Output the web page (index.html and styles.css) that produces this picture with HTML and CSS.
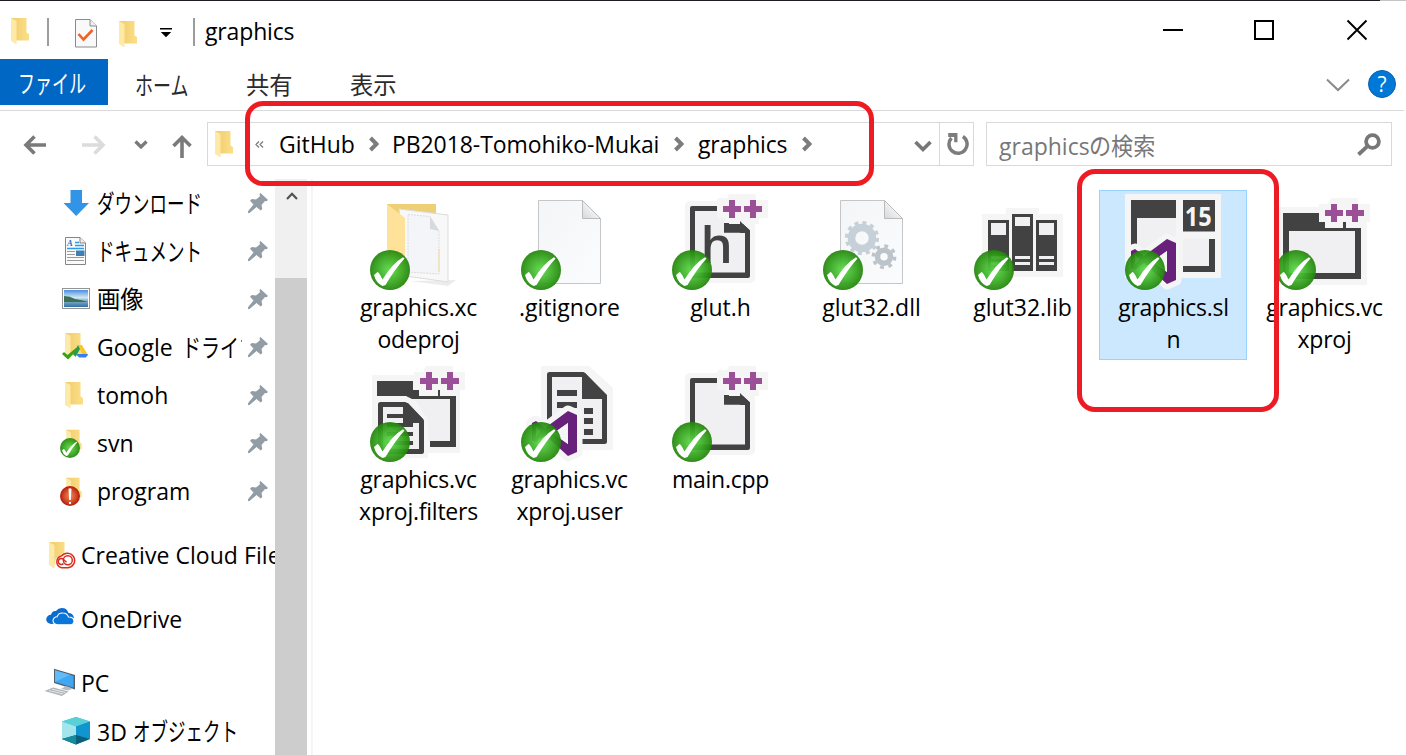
FILE: index.html
```html
<!DOCTYPE html>
<html lang="ja">
<head>
<meta charset="utf-8">
<title>graphics</title>
<link rel="stylesheet" href="styles.css">
</head>
<body>
<svg class="defs" width="0" height="0">
  <defs>
    <radialGradient id="gGreen" cx=".5" cy=".5" r=".52"><stop offset="0" stop-color="#5fdc4c"/><stop offset=".5" stop-color="#3db028"/><stop offset=".85" stop-color="#289010"/><stop offset="1" stop-color="#1f7d08"/></radialGradient>
    <radialGradient id="gRed" cx=".5" cy=".5" r=".52"><stop offset="0" stop-color="#f08a50"/><stop offset=".6" stop-color="#d04a28"/><stop offset="1" stop-color="#b01208"/></radialGradient>
    <linearGradient id="gFold" x1="0" y1="0" x2="1" y2="0"><stop offset="0" stop-color="#f0cc6c"/><stop offset="1" stop-color="#fbdf88"/></linearGradient>
    <linearGradient id="gPage" x1="0" y1="0" x2="1" y2="1"><stop offset="0" stop-color="#f4f5f6"/><stop offset="1" stop-color="#fbfcfd"/></linearGradient>
    <linearGradient id="gCorner" x1="0" y1="1" x2="1" y2="0"><stop offset="0" stop-color="#d5d7d9"/><stop offset=".6" stop-color="#f5f5f5"/></linearGradient>
    <linearGradient id="gSky" x1="0" y1="0" x2="0" y2="1"><stop offset="0" stop-color="#4c8fe0"/><stop offset=".45" stop-color="#d3e8f5"/><stop offset=".6" stop-color="#8fb6c8"/><stop offset="1" stop-color="#2f6fa8"/></linearGradient>
    <symbol id="folder" viewBox="0 0 20 28"><path d="M1 1H16.500V15.500L19 17V23.500H4Z" fill="url(#gFold)"/><path d="M1 1L6.500 4V27.500L1 24Z" fill="#ffe9a6"/></symbol>
    <symbol id="badge" viewBox="0 0 40 40"><circle cx="20" cy="20" r="20" fill="url(#gGreen)" opacity=".93"/><path d="M4 25L7.500 22Q9 22 12.500 29.500Q23 13 33 7.300L34.500 8.500Q25 19 15.500 35L12.500 36Q6 33 4 25Z" fill="#fff"/></symbol>
    <symbol id="plus" viewBox="0 0 51 30"><path d="M12 0h18v6h-9v0h9v-6h9v6h12v18h-9v6h-18v0h-12v-6h-12v-18h9z" fill="#f5f5f5"/><path d="M12 6h6v6h6v6h-6v6h-6v-6h-6v-6h6zM33 6h6v6h6v6h-6v6h-6v-6h-6v-6h6z" fill="#9b4f96"/></symbol>
    <symbol id="sheet" viewBox="0 0 96 96"><path d="M17.500 6.500H61.500L79.500 24.500V89.500H17.500Z" fill="url(#gPage)" stroke="#c4c6c8"/><path d="M61.500 6.500V24.500H79.500Z" fill="url(#gCorner)" stroke="#b9bbbd"/></symbol>
    <symbol id="codepage" viewBox="0 0 96 96"><rect x="13" y="7" width="70" height="82" rx="5" fill="#f5f5f5"/><path d="M20 14H68L76 37V81H20Z" fill="#f0eff1"/><path d="M46 12H20Q18 12 18 14V82Q18 84 20 84H76Q78 84 78 82V36.500L68 26.500V29H52V38.500H73V78.500H23V17H46Z" fill="#424242"/><path d="M46 7h7v22h15l15 10V4H46Z" fill="#f5f5f5"/><path d="M52 29H70L78 36.500V38.500H52Z" fill="#424242"/><use href="#plus" x="45" y="0" width="51" height="30"/><path d="M68 27L78 37V39H68Z" fill="#424242"/></symbol>
    <symbol id="vs" viewBox="0 0 60 96"><path fill-rule="evenodd" d="M42 45L51 49V86L42 90L19 69L10 76L6 74V57L10 55L19 62ZM42 57L27 67.500L42 78ZM10 61V70L14.500 65.500Z" fill="#68217a" stroke="#f5f5f5" stroke-width="11" stroke-linejoin="round" paint-order="stroke"/><path d="M42 57L27 67.500L42 78ZM10 61V70L14.500 65.500Z" fill="#f5f5f5"/></symbol>
    <symbol id="pin" viewBox="0 0 20 20"><path d="M12.500 0L20 7L18.500 8.300L17 8L13.500 12L14.300 16L12.600 17.500L8.500 14L1.500 20H0V18.300L5.500 11.500L2 7.800L3.800 6L8 6.500L12 3.300L11.500 1.300Z" fill="#929ca4"/></symbol>
    <symbol id="chev" viewBox="0 0 10 16"><path d="M1.500 2L7.500 8L1.500 14" fill="none" stroke="#7c7c7c" stroke-width="4"/></symbol>
  </defs>
</svg>
<div class="window">
  <div class="edge"></div>
  <header class="titlebar">
    <svg class="tfolder" width="20" height="28"><use href="#folder"/></svg>
    <i class="bar bar1"></i>
    <svg class="tcheck" width="22" height="29" viewBox="0 0 22 29"><path d="M.5.500H15L21.500 7V28H.5Z" fill="#f9f9fb" stroke="#8b8b8b"/><path d="M15 .5V7H21.500" fill="#eee" stroke="#8b8b8b"/><path d="M3.500 15L8.500 20.500L17.500 11" fill="none" stroke="#f4621d" stroke-width="2.600"/></svg>
    <svg class="tfolder2" width="20" height="28"><use href="#folder"/></svg>
    <svg class="tdrop" width="12" height="10" viewBox="0 0 12 10"><path d="M0 0H12V1.500H0ZM.8 4H11.200L6 9.200Z" fill="#000"/></svg>
    <i class="bar bar2"></i>
    <span class="title">graphics</span>
    <svg class="wbtn" width="206" height="22" viewBox="0 0 206 22"><path d="M0 11H20" stroke="#000" stroke-width="2"/><rect x="92" y="2" width="18" height="18" fill="none" stroke="#000" stroke-width="2"/><path d="M184.500 1.500L203.500 20.500M203.500 1.500L184.500 20.500" stroke="#000" stroke-width="1.900"/></svg>
  </header>
  <nav class="tabs">
    <span class="tab file"><b class="k">ファイル</b></span>
    <span class="tab t-home"><b class="k">ホーム</b></span>
    <span class="tab t-share"><b class="k kanji">共有</b></span>
    <span class="tab t-view"><b class="k kanji">表示</b></span>
    <svg class="expand" width="24" height="14" viewBox="0 0 24 14"><path d="M1 1.500L12 12L23 1.500" fill="none" stroke="#8a8a8a" stroke-width="2"/></svg>
    <span class="help">?</span>
  </nav>
  <div class="addressrow">
    <svg class="navs" width="207" height="44" viewBox="0 0 207 44" fill="none" stroke="#7a7a7a" stroke-width="3.600">
      <path d="M46 23H26M34.500 14.500L26 23L34.500 31.500"/>
      <path stroke="#dcdcdc" d="M82 23H102M94.500 14.500L103 23L94.500 31.500"/>
      <path stroke-width="3.300" d="M135.500 19.500L141 25L146.500 19.500"/>
      <path d="M182 36V16M173.500 24L182 15.500L190.500 24"/>
    </svg>
    <div class="address">
      <svg class="afolder" width="20" height="28"><use href="#folder"/></svg>
      <svg class="laq" width="9" height="7" viewBox="0 0 9 7"><path d="M4 .5L1 3.500L4 6.500M8 .5L5 3.500L8 6.500" fill="none" stroke="#777" stroke-width="1.200"/></svg>
      <span class="c1">GitHub</span><svg class="cv" width="10" height="16"><use href="#chev"/></svg>
      <span class="c2">PB2018-Tomohiko-Mukai</span><svg class="cv" width="10" height="16"><use href="#chev"/></svg>
      <span class="c3">graphics</span><svg class="cv" width="10" height="16"><use href="#chev"/></svg>
      <svg class="adrop" width="18" height="13" viewBox="0 0 18 13"><path d="M1.500 2L9 9.500L16.500 2" fill="none" stroke="#777" stroke-width="3.600"/></svg>
    </div>
    <div class="refresh"><svg width="22" height="24" viewBox="0 0 20 22"><path d="M14.500 4.200A8.300 8.300 0 1 1 4 5.500" fill="none" stroke="#7c7c7c" stroke-width="3.200"/><path d="M1 1H9.500V9.500H6.500V4.500H1Z" fill="#7c7c7c"/></svg></div>
    <div class="search"><span class="ph">graphics</span><b class="k sk">の検索</b>
      <svg class="mag" width="24" height="23" viewBox="0 0 24 23"><circle cx="15.500" cy="8.500" r="6.400" fill="none" stroke="#777" stroke-width="3.800"/><path d="M10.800 12.800L1.500 21.500" stroke="#777" stroke-width="3.800"/></svg>
    </div>
  </div>
  <div class="body">
    <aside class="side">
      <div class="item"><svg width="30" height="30" viewBox="0 0 30 30"><path d="M8.500 2H20V15H27L14.200 28L1.500 15H8.500Z" fill="#3294e6"/></svg><span><b class="k">ダウンロード</b></span><svg class="pin" width="20" height="20"><use href="#pin"/></svg></div>
      <div class="item"><svg width="30" height="30" viewBox="0 0 30 30"><path d="M3.500 1.500H18L23.500 7V28.500H3.500Z" fill="#fafafa" stroke="#858585"/><path d="M18 1.500V7H23.500" fill="#eee" stroke="#858585"/><path d="M13 6.500H17M13 9.500H22M5 12.500H22" stroke="#2f9be6" stroke-width="1.300"/><path d="M5 15.500H13M5 18.500H13M5 21.500H22M5 24.500H22" stroke="#9a9a9a"/><rect x="14" y="14.500" width="8.500" height="5.500" fill="#3f7eb0"/><text x="5" y="10" font-size="8.500" font-weight="bold" font-style="italic" font-family="Liberation Serif" fill="#1177cc">A</text></svg><span><b class="k">ドキュメント</b></span><svg class="pin" width="20" height="20"><use href="#pin"/></svg></div>
      <div class="item"><svg width="30" height="30" viewBox="0 0 30 30"><rect x=".5" y="4.500" width="27" height="20" fill="#fff" stroke="#949494"/><rect x="2" y="6" width="24" height="17" fill="url(#gSky)"/><path d="M2 12Q8 12 13 15Q20 16 26 18H2Z" fill="#3d6f55"/></svg><span><b class="k kanji">画像</b></span><svg class="pin" width="20" height="20"><use href="#pin"/></svg></div>
      <div class="item"><svg width="30" height="30" viewBox="0 0 30 30"><use href="#folder" x="2" y="0" width="20" height="28"/><path d="M16 13H20L26.500 24H21Z" fill="#fbc62c"/><path d="M14 22L17 25.500H24L26 22Z" fill="#3d7fe8"/><path d="M16 13L18 17L13.500 25L11 22Z" fill="#209c5c"/><path d="M0 22L2 20L5.500 23L14 16L16 17L6 27.500Z" fill="#39a117"/></svg><span class="clip"><i class="g1">Google</i><b class="k">ドライブ</b></span><svg class="pin" width="20" height="20"><use href="#pin"/></svg></div>
      <div class="item"><svg width="30" height="30" viewBox="0 0 30 30"><use href="#folder" x="2" y="1" width="20" height="28"/></svg><span class="e">tomoh</span><svg class="pin" width="20" height="20"><use href="#pin"/></svg></div>
      <div class="item"><svg class="ov" width="30" height="30" viewBox="0 0 30 30"><use href="#folder" x="2" y="1" width="20" height="24"/><use href="#badge" x="-2" y="10" width="20" height="20"/></svg><span class="e">svn</span><svg class="pin" width="20" height="20"><use href="#pin"/></svg></div>
      <div class="item"><svg class="ov" width="30" height="30" viewBox="0 0 30 30"><use href="#folder" x="2" y="1" width="20" height="24"/><circle cx="8" cy="20" r="10" fill="url(#gRed)"/><path d="M6.500 13Q8 11.500 9.500 13L8.800 24H7.200Z" fill="#fff"/><circle cx="8" cy="27" r="1.200" fill="#fff"/></svg><span class="e">program</span><svg class="pin" width="20" height="20"><use href="#pin"/></svg></div>
      <div class="item root"><svg width="30" height="30" viewBox="0 0 30 30"><use href="#folder" x="2" y="1" width="20" height="28"/><path d="M15 15.500Q18 11 23 12.500Q30 14.500 29.500 21Q29 28 22 28.500H15Q9 28 9 22Q9.500 16.500 15 15.500Z" fill="#fff"/><g fill="none" stroke="#da2e20" stroke-width="1.500"><path d="M15.500 16A6 6 0 0 0 15.500 27.700H22A7.300 7.300 0 1 0 15.500 16"/><circle cx="21.800" cy="20.300" r="4.500"/><path d="M17.500 23.500A3 3 0 1 1 17.500 19.500L20.500 22.300"/></g></svg><span class="cc">Creative Cloud Files</span></div>
      <div class="item root"><svg width="30" height="30" viewBox="0 0 30 30"><g transform="translate(0 2)"><path d="M5 18Q0 17 .2 13Q1 9 5 8.800Q6 4.500 10 5Q13 1 18 2.300Q21 3 22.500 7Q27 7 28 12L17 17Z" fill="#0a6cce"/><path d="M10.500 18.500Q7 18 7 14.500Q7.500 11 11 10.800Q12.500 6.500 17 7Q21 7 22.500 11Q28 11 28 15.500Q27.500 18.500 25 18.700H10.500Z" fill="#0a77d8" stroke="#fff" stroke-width="1.100"/></g></svg><span class="e">OneDrive</span></div>
      <div class="item root"><svg class="ov" width="30" height="30" viewBox="0 0 30 30"><path d="M8 .8L29 7V21.500L8 15Z" fill="#555f68"/><path d="M9 2.200L27.500 8V19.500L9 14Z" fill="#3fa7f3"/><path d="M9 14L24 6.800L9 2.200Z" fill="#62baf8"/><path d="M15 21L20 18L27 20.500L22 22.500Z" fill="#b5bdc2"/><path d="M-1.500 23L7 19.500L22.500 23.500L16 28Z" fill="#aeb4b8"/><path d="M3 22.500L17 26M6 21.200L19.500 24.500" stroke="#e6e9eb"/></svg><span class="e">PC</span></div>
      <div class="item"><svg width="30" height="30" viewBox="0 0 30 30"><path d="M14 1L28 5.500V23L14 28.500L0 23V5.500Z" fill="#35b8cf"/><path d="M14 1L28 5.500L14 10.500L0 5.500Z" fill="#59d0d8"/><path d="M0 5.500L14 10.500V20L0 23Z" fill="#a3e5ec"/><path d="M14 10.500L28 5.500V23L14 20Z" fill="#1095cf"/><path d="M0 23L14 19L28 23L14 28.500Z" fill="#0b5f7a"/><path d="M0 23L14 19V28.500Z" fill="#178b9c"/></svg><span class="three"><i class="g2">3D</i><b class="k">オブジェクト</b></span></div>
    </aside>
    <div class="scroll"><svg width="12" height="8" viewBox="0 0 12 8"><path d="M1 7L6 1.800L11 7" fill="none" stroke="#505050" stroke-width="2.200"/></svg><div class="thumb"></div></div>
    <main class="files">
      <div class="tile"><svg class="ic" viewBox="0 0 96 96"><path d="M17 10H66V60H17Z" fill="#efcf75"/><path d="M40 87L86 86L78 92Z" fill="#ececec"/><path d="M29 15L78 21V88L36 82Z" fill="#f8f8f9" stroke="#dcdcdc"/><path d="M38 20.500L60 22.500L69 37V80L38 78Z" fill="#f3f5f8" stroke="#dadcdf" stroke-dasharray="2 1"/><path d="M60 22.500V35L69 37Z" fill="#d8d9dc"/><path d="M69 55V78" stroke="#f3dc95"/><path d="M17 10L35 24V91L17 86Z" fill="#fee29a"/><use href="#badge" y="56" width="40" height="40"/></svg><span class="n tight">graphics.xc<br>odeproj</span></div>
      <div class="tile"><svg class="ic" viewBox="0 0 96 96"><use href="#sheet"/><use href="#badge" y="56" width="40" height="40"/></svg><span class="n">.gitignore</span></div>
      <div class="tile"><svg class="ic" viewBox="0 0 96 96"><use href="#codepage"/><text x="28.500" y="69" font-family="Open Sans" font-size="51" font-weight="600" fill="#424242">h</text><use href="#badge" y="56" width="40" height="40"/></svg><span class="n">glut.h</span></div>
      <div class="tile"><svg class="ic" viewBox="0 0 96 96"><use href="#sheet"/><g fill="none" stroke="#c6d0d8"><circle cx="39" cy="44" r="10.500" stroke-width="7.500"/><circle cx="39" cy="44" r="15.300" stroke-width="3.600" stroke-dasharray="4 4.010"/><circle cx="61" cy="62.700" r="6.500" stroke-width="5.500" stroke="#bcc4ca"/><circle cx="61" cy="62.700" r="10.700" stroke-width="3.400" stroke-dasharray="3.800 4.600" stroke="#bcc4ca"/></g><use href="#badge" y="56" width="40" height="40"/></svg><span class="n">glut32.dll</span></div>
      <div class="tile"><svg class="ic" viewBox="0 0 96 96"><path d="M8 20H32V14H65V20H89V83H8Z" fill="#f5f5f5"/><path d="M14 26H35V77H14ZM38 20H59V77H38ZM62 26H83V77H62Z" fill="#424242"/><path d="M17 29H32V41H17ZM41 23H56V32H41ZM65 29H80V41H65ZM17 62H32V65H17ZM17 68H32V71H17ZM41 62H56V65H41ZM41 68H56V71H41ZM65 62H80V65H65ZM65 68H80V71H65Z" fill="#f0eff1"/><use href="#badge" y="56" width="40" height="40"/></svg><span class="n">glut32.lib</span></div>
      <div class="tile sel"><svg class="ic" viewBox="0 0 96 96"><path d="M0 0H96V84H0Z" fill="#f5f5f5"/><path d="M6 6H51V60H6Z" fill="#424242"/><path d="M12 24H51V60H12Z" fill="#f0eff1"/><path d="M58 6H90V37.500H58Z" fill="#424242"/><text x="59.800" y="32" textLength="27" lengthAdjust="spacingAndGlyphs" font-family="Open Sans" font-weight="bold" font-size="27" fill="#f5f5f5">15</text><path d="M84 45H90V78H58V72H84Z" fill="#424242"/><path d="M58 45H84V72H58Z" fill="#f0eff1"/><use href="#vs" width="60" height="96"/><use href="#badge" y="56" width="40" height="40"/></svg><span class="n tight">graphics.sl<br>n</span></div>
      <div class="tile"><svg class="ic" viewBox="0 0 96 96"><path d="M1 13H43V11H91V91H1Z" fill="#f5f5f5"/><path d="M7 19H43V28H49V34H85V85H7Z" fill="#424242"/><path d="M13 37H79V79H13Z" fill="#f0eff1"/><use href="#plus" x="43" y="4" width="51" height="30"/><path d="M67 28H70V35H67Z" fill="#424242"/><use href="#badge" y="56" width="40" height="40"/></svg><span class="n tight">graphics.vc<br>xproj</span></div>
      <div class="tile"><svg class="ic" viewBox="0 0 96 96"><path d="M2 9H90V87H2Z" fill="#f5f5f5"/><path d="M7 15H43V24H49V30H86V81H60V75H80V33H42L36 30H7Z" fill="#424242"/><path d="M45 33H80V75H55V50Z" fill="#f0eff1"/><use href="#plus" x="44" y="0" width="51" height="30"/><path d="M68 24H70V31H68Z" fill="#424242"/><path d="M12 32H38L58 52V92H4V36Z" fill="#f5f5f5"/><path d="M10.500 38.500H35L51.500 55V85.500H10.500Z" fill="#f0eff1" stroke="#424242" stroke-width="5" stroke-linejoin="round"/><path d="M33 37H38L53 53V57H33Z" fill="#424242"/><path d="M17 48H33V52H17ZM17 57H43V61H17ZM17 66H43V70H17ZM17 75H43V79H17Z" fill="#424242"/><use href="#badge" y="56" width="40" height="40"/></svg><span class="n tight">graphics.vc<br>xproj.filters</span></div>
      <div class="tile"><svg class="ic" viewBox="0 0 96 96"><path d="M20 0H68L92 22V84H20Z" fill="#f5f5f5"/><path d="M28.500 8.500H62L83.500 31V75.500H28.500Z" fill="#f0eff1" stroke="#424242" stroke-width="5" stroke-linejoin="round"/><path d="M61 7H64L86 29V33H61Z" fill="#424242"/><path d="M36 24H56V30H36ZM36 36H56V42H36ZM63 42H72V48H63ZM63 52H72V58H63ZM63 63H72V69H63Z" fill="#424242"/><use href="#vs" x="5" width="60" height="96"/><use href="#badge" y="56" width="40" height="40"/></svg><span class="n tight">graphics.vc<br>xproj.user</span></div>
      <div class="tile"><svg class="ic" viewBox="0 0 96 96"><use href="#codepage"/><use href="#badge" y="56" width="40" height="40"/></svg><span class="n tight">main.cpp</span></div>
    </main>
  </div>
  <div class="mark m1"></div>
  <div class="mark m2"></div>
</div>
</body>
</html>
```
FILE: styles.css
```css
* { box-sizing: border-box; }
body { margin: 0; background: #fff; }
i { font-style: normal; }
.defs { position: absolute; }
.window { position: relative; width: 1406px; height: 755px; overflow: hidden; background: #fff; color: #000; font: 23px/32px "Open Sans", "Noto Sans CJK JP", sans-serif; display: flex; flex-direction: column; }
.window svg { flex: none; display: block; }
.window span { white-space: nowrap; }
.edge { height: 1px; flex: none; background: linear-gradient(90deg, #1d1c22 1380px, #c4c4c4 1380px); }
.k { display: inline-block; font: 400 25px/32px "Noto Sans CJK JP", sans-serif; transform-origin: 0 50%; transform: scaleX(.7); }
.k.kanji { font-size: 24px; transform: scaleX(.97); }

.titlebar { height: 58px; flex: none; display: flex; align-items: flex-start; }
.tfolder { margin: 16px 0 0 10px; }
.bar { width: 2px; height: 28px; margin-top: 17px; background: #9c9c9c; }
.bar1 { margin-left: 17px; }
.tcheck { margin: 18px 0 0 26px; }
.tfolder2 { margin: 19px 0 0 21px; }
.tdrop { margin: 27px 0 0 22px; }
.bar2 { margin-left: 21px; }
.title { margin: 14px 0 0 10px; width: 90px; letter-spacing: -.15px; }
.wbtn { margin: 18px 0 0 868px; }

.tabs { height: 52px; flex: none; display: flex; align-items: flex-start; border-bottom: 1px solid #d9d9d9; margin-right: 2px; color: #2b2b2b; }
.tab { height: 46px; padding-top: 9px; }
.file { width: 108px; background: #0067c5; color: #fff; padding: 7px 0 0 18px; }
.file .k { transform: scaleX(.68); }
.t-home { width: 138px; padding-left: 27px; }
.t-home .k { transform: scaleX(.72); }
.t-share { width: 104px; }
.t-view { width: 976px; }
.expand { margin-top: 19px; }
.help { width: 28px; height: 28px; margin: 11px 0 0 18px; border-radius: 50%; background: #0078d7; border: 1px solid #0b62ab; color: #fff; font-size: 21px; line-height: 26px; text-align: center; }

.addressrow { height: 68px; flex: none; display: flex; padding-top: 11px; }
.address { width: 733px; height: 44px; border: 1px solid #d9d9d9; display: flex; align-items: center; padding-left: 6px; }
.afolder { margin-top: -1px; }
.laq { margin: 0 15px 0 21px; }
.c1 { width: 76px; }
.c2 { width: 268px; letter-spacing: -.08px; }
.c3 { width: 90px; letter-spacing: -.15px; }
.cv { margin: 0 13px 0 14px; }
.c2 + .cv { margin-right: 14px; }
.adrop { margin: 5px 0 0 89px; }
.refresh { width: 34px; height: 44px; border: 1px solid #d9d9d9; border-left: 0; padding: 9px 0 0 7px; }
.search { width: 406px; height: 44px; margin-left: 12px; border: 1px solid #d9d9d9; color: #777; display: flex; padding: 7px 0 0 12px; }
.ph { width: 90px; }
.k.sk { width: 270px; font-size: 24px; line-height: 30px; transform: scaleX(.92); }
.mag { margin: 3px 0 0 -2px; }

.body { height: 576px; display: flex; }
.side { width: 275px; overflow: hidden; }
.item { height: 48px; display: flex; align-items: center; padding: 0 0 1px 62px; }
.item > span { margin-left: 5px; width: 145px; flex: none; }
.ov { overflow: visible; }
.item.root { padding-left: 46px; margin-top: 16px; }
.item.root > span { width: 194px; }
.pin { margin-left: 6px; }
.item > .clip { display: flex; overflow: hidden; }
.item > .e, .item > .cc, .g1 { padding-top: 1px; }
.cc { letter-spacing: .05px; }
.g1 { width: 85px; flex: none; }
.clip .k { transform: scaleX(.76); }
.g2 { display: inline-block; width: 36px; }
.item > .three { width: 178px; }
.scroll { width: 32px; background: #f0f0f0; }
.scroll svg { margin: 13px 0 0 11px; }
.thumb { margin-top: 78px; height: 477px; background: #cdcdcd; }
.files { margin-left: 4px; border-left: 2px solid #f5f5f5; padding: 11px 0 0 31px; display: grid; grid-template-columns: repeat(7, 148px); grid-auto-rows: 170px; gap: 2px 3px; }
.tile { border: 1px solid transparent; padding-top: 3px; text-align: center; }
.tile.sel { background: #cce8ff; border-color: #99d1ff; }
.ic { width: 96px; height: 96px; margin: 0 auto 1px 25px; }
.n { display: block; padding-left: 1px; }
.tight { letter-spacing: -.25px; }

.mark { position: absolute; border: 5px solid #ed1c24; border-radius: 18px; }
.m1 { left: 245px; top: 101px; width: 629px; height: 85px; }
.m2 { left: 1077px; top: 169px; width: 202px; height: 243px; }
```
